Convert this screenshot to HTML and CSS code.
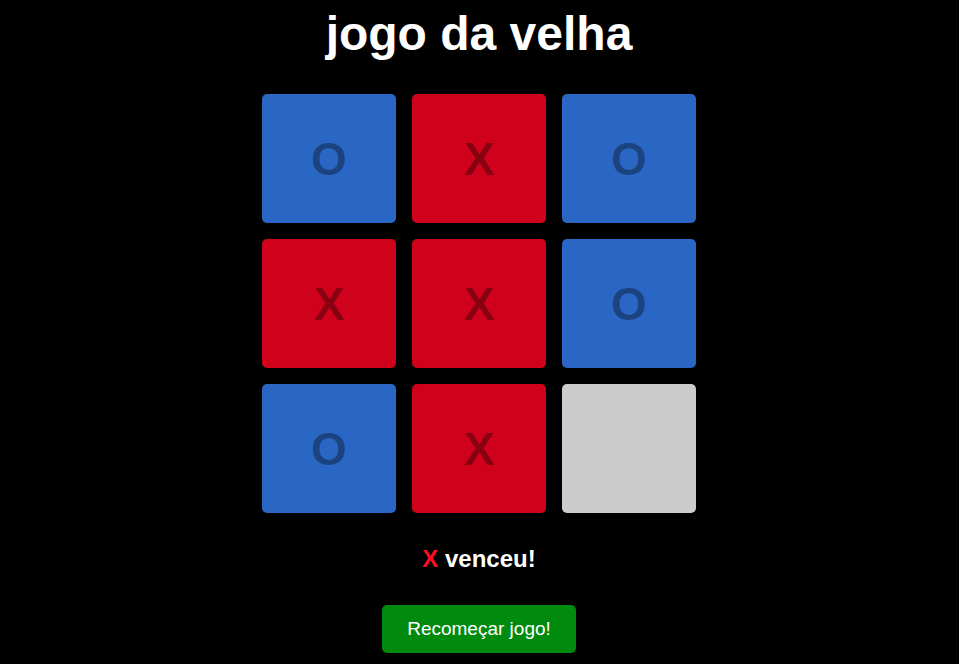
FILE: index.html
```html
<!DOCTYPE html>
<html lang="pt-BR">
<head>
<meta charset="utf-8">
<title>jogo da velha</title>
<link rel="stylesheet" href="styles.css">
</head>
<body>
<main class="app">
  <h1 class="title">jogo da velha</h1>
  <div class="board">
    <div class="cell cell-o">O</div>
    <div class="cell cell-x">X</div>
    <div class="cell cell-o">O</div>
    <div class="cell cell-x">X</div>
    <div class="cell cell-x">X</div>
    <div class="cell cell-o">O</div>
    <div class="cell cell-o">O</div>
    <div class="cell cell-x">X</div>
    <div class="cell cell-empty"></div>
  </div>
  <p class="status"><span class="winner">X</span> venceu!</p>
  <button class="restart" type="button">Recomeçar jogo!</button>
</main>
</body>
</html>
```

FILE: styles.css
```css
html, body {
  margin: 0;
  padding: 0;
  background: #000;
  font-family: "Liberation Sans", Arial, sans-serif;
  color: #fff;
}

.app {
  display: flex;
  flex-direction: column;
  align-items: center;
  padding-top: 6px;
  padding-right: 1px;
}

.title {
  margin: 0;
  font-size: 48px;
  font-weight: bold;
  line-height: 55px;
}

.board {
  margin-top: 33px;
  display: grid;
  grid-template-columns: repeat(3, 134px);
  grid-auto-rows: 129px;
  gap: 16px;
}

.cell {
  border-radius: 5px;
  display: flex;
  align-items: center;
  justify-content: center;
  font-size: 46px;
  font-weight: bold;
  color: rgba(0, 0, 0, 0.34);
}

.cell-o { background: #2a67c4; }
.cell-x { background: #d0021b; }
.cell-empty { background: #cccccc; }

.status {
  margin: 32px 0 0;
  font-size: 24px;
  font-weight: bold;
  line-height: 28px;
}

.winner { color: #ff0a25; }

.restart {
  margin-top: 32px;
  width: 194px;
  height: 48px;
  border: none;
  border-radius: 5px;
  background: #008a0e;
  color: #fff;
  font-family: "Liberation Sans", Arial, sans-serif;
  font-size: 19px;
  cursor: pointer;
}
```
